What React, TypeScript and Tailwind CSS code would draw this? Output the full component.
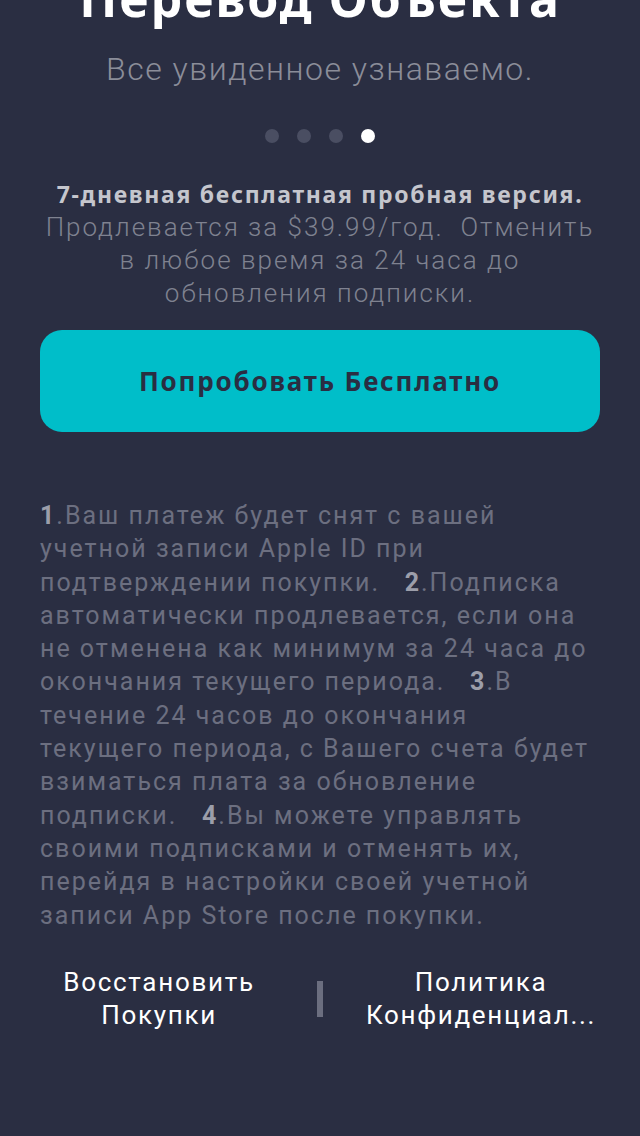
import * as React from "react";

const LegalNum = ({ n }: { n: number }) => (
  <span className="font-bold text-[#9c9eaa]">{n}</span>
);

const Dots = ({ count, active }: { count: number; active: number }) => (
  <div className="flex items-center justify-center gap-[18px]">
    {Array.from({ length: count }).map((_, i) => (
      <span
        key={i}
        className={
          i === active
            ? "h-[14px] w-[14px] rounded-full bg-white"
            : "h-[14px] w-[14px] rounded-full bg-[#4a4e62]"
        }
      />
    ))}
  </div>
);

const App = () => {
  return (
    <div className="flex min-h-[1136px] w-full flex-col overflow-hidden bg-[#2a2e42] font-['Roboto',sans-serif]">
      <h1 className="-mt-[27px] text-center font-['Noto_Sans',sans-serif] text-[50px] font-bold leading-none tracking-[2px] text-white">
        Перевод Объекта
      </h1>
      <p className="mt-[28px] text-center text-[32px] font-light leading-[36px] tracking-[1.5px] text-[#8b8d99]">
        Все увиденное узнаваемо.
      </p>
      <div className="mt-[42px]">
        <Dots count={4} active={3} />
      </div>
      <div className="mt-[35px] px-10 text-center text-[26px] font-light leading-[33px] tracking-[2px] text-[#7f8290]">
        <p className="font-['Noto_Sans',sans-serif] text-[23px] font-bold tracking-[1.7px] text-[#c5c6cd]">
          7-дневная бесплатная пробная версия.
        </p>
        <p>
          Продлевается за $39.99/год.&nbsp; Отменить в любое время за 24 часа до
          обновления подписки.
        </p>
      </div>
      <div className="mt-[20px] px-10">
        <button className="flex h-[102px] w-full items-center justify-center rounded-[22px] bg-[#00bec9] font-['Noto_Sans',sans-serif] text-[26px] font-bold tracking-[1.8px] text-[#2a2e42]">
          Попробовать Бесплатно
        </button>
      </div>
      <p className="mt-[67px] px-10 text-[25px] leading-[33.3px] tracking-[2px] text-[#6c6f80]">
        <LegalNum n={1} />
        .Ваш платеж будет снят с вашей учетной записи Apple ID при
        подтверждении покупки.&nbsp;&nbsp; <LegalNum n={2} />
        .Подписка автоматически продлевается, если она не отменена как минимум
        за 24 часа до окончания текущего периода.&nbsp;&nbsp;{" "}
        <LegalNum n={3} />
        .В течение 24 часов до окончания
        <br />
        текущего периода, с Вашего счета будет взиматься плата за обновление
        подписки.&nbsp;&nbsp; <LegalNum n={4} />
        .Вы можете управлять своими подписками и отменять их, перейдя в
        настройки своей учетной записи App Store после покупки.
      </p>
      <div className="mt-[34px] flex items-center gap-[39px] px-10 text-center text-[26px] leading-[33px] tracking-[1.7px] text-white">
        <a className="flex-1">
          Восстановить
          <br />
          Покупки
        </a>
        <span className="h-[36px] w-[6px] bg-[#6b6e7f]" />
        <a className="flex-1">
          Политика
          <br />
          Конфиденциал...
        </a>
      </div>
    </div>
  );
};

export default App;
